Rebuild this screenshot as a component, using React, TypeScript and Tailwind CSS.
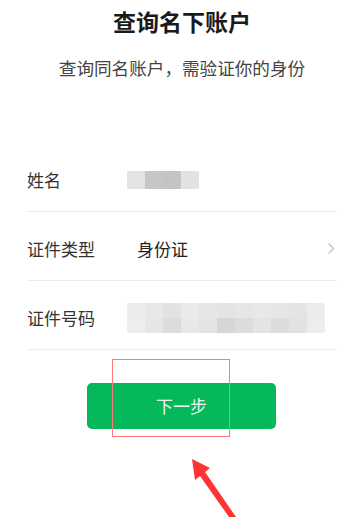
import React from "react";

const NAME_BLOCKS = ["#e4e4e4", "#c6c6c6", "#c4c4c4", "#e2e2e2"];
const ID_TOP = ["#ececec", "#e8e8e8", "#e2e2e2", "#eaeaea", "#e6e6e6", "#e4e4e4", "#e6e6e6", "#e8e8e8", "#e6e6e6", "#e4e4e4", "#ececec"];
const ID_BOTTOM = ["#eeeeee", "#e6e6e6", "#dcdcdc", "#e8e8e8", "#e4e4e4", "#d6d6d6", "#dcdcdc", "#e4e4e4", "#dcdcdc", "#e2e2e2", "#ededed"];

function Row({ label, children }: { label: string; children?: React.ReactNode }) {
  return (
    <div className="flex h-[69px] items-center border-b border-[#ececec] pt-[5px]">
      <div className="w-[100px] shrink-0 text-[17px] text-[#333]">{label}</div>
      <div className="flex flex-1 items-center">{children}</div>
    </div>
  );
}

export default function App() {
  return (
    <div
      className="relative h-[517px] w-[348px] overflow-hidden bg-white"
      style={{ fontFamily: '"Noto Sans CJK SC", "Noto Sans", sans-serif' }}
    >
      <h1 className="mt-[6px] pl-[16px] text-center text-[23px] font-bold leading-[30px] text-[#1a1a1a]">
        查询名下账户
      </h1>
      <p className="mt-[19px] pl-[16px] text-center text-[17.6px] leading-[26px] text-[#444]">
        查询同名账户，需验证你的身份
      </p>

      <div className="mr-[11px] mt-[62px] ml-[27px]">
        <Row label="姓名">
          <div className="flex">
            {NAME_BLOCKS.map((c, i) => (
              <div key={i} className="h-[18px] w-[18px]" style={{ background: c }} />
            ))}
          </div>
        </Row>
        <Row label="证件类型">
          <span className="ml-[10px] text-[17px] text-[#222]">身份证</span>
          <svg className="ml-auto mr-[2px]" width="8" height="13" viewBox="0 0 8 13">
            <path d="M1.5 1.5 L6.5 6.5 L1.5 11.5" fill="none" stroke="#c8c8c8" strokeWidth="1.5" />
          </svg>
        </Row>
        <Row label="证件号码">
          <div className="flex flex-col overflow-hidden rounded-[3px]">
            <div className="flex">
              {ID_TOP.map((c, i) => (
                <div key={i} className="h-[15px] w-[18px]" style={{ background: c }} />
              ))}
            </div>
            <div className="flex">
              {ID_BOTTOM.map((c, i) => (
                <div key={i} className="h-[15px] w-[18px]" style={{ background: c }} />
              ))}
            </div>
          </div>
        </Row>
      </div>

      <div className="mt-[33px] flex justify-center pl-[15px]">
        <button className="h-[46px] w-[189px] rounded-[5px] bg-[#05b85a] text-[17px] text-[#eafaf0]">
          下一步
        </button>
      </div>

      <div className="absolute left-[112px] top-[359px] h-[78px] w-[118px] border border-[#ff7a7a]" />

      <svg className="absolute left-0 top-0" width="348" height="517" viewBox="0 0 348 517">
        <polygon points="192,459 210,468 205,472 236,517 229,517 200,476 195,480" fill="#ff3333" />
      </svg>
    </div>
  );
}
